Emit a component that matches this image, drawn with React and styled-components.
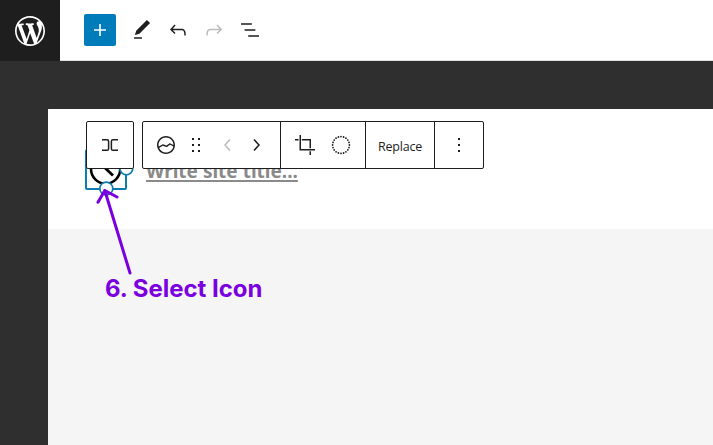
import React from 'react';
import styled, { createGlobalStyle } from 'styled-components';

const Global = createGlobalStyle`
  * { box-sizing: border-box; }
  body { margin: 0; overflow: hidden; background: #2f2f2f; }
`;
const Editor = styled.div`
  width: 713px; height: 445px; display: flex; flex-direction: column;
  background: #2f2f2f; overflow: hidden;
`;
const TopBar = styled.header`
  height: 61px; flex: none; display: flex; background: #fff; border-bottom: 1px solid #e0e0e0;
`;
const Home = styled.div`
  width: 60px; height: 61px; background: #1e1e1e; color: #fff;
  display: flex; align-items: center; justify-content: center;
`;
const Tools = styled.div`
  display: flex; align-items: center; height: 60px; padding-left: 24px; gap: 12px;
`;
const AddButton = styled.button`
  width: 32px; height: 32px; padding: 0; border: 0; border-radius: 2px; margin-right: 2px;
  background: #007cba; color: #fff; display: flex; align-items: center; justify-content: center;
`;
const Icon = styled.svg`
  width: ${p => p.$size || 24}px; height: ${p => p.$size || 24}px; display: block; flex: none;
  fill: currentColor; color: ${p => p.$color || 'inherit'};
`;
const Canvas = styled.main`
  position: relative; flex: 1; margin: 48px 0 0 48px; background: #f5f5f5;
  border-top-left-radius: 1px; overflow: hidden;
`;
const SiteHeader = styled.div`
  height: 120px; background: #fff; display: flex; padding: 40px 0 0 37px; gap: 19px;
`;
const LogoBlock = styled.div`
  width: 42px; height: 41px; border: 2px solid #0f7cb0; border-radius: 2px;
`;
const LogoArt = styled.svg`
  display: block; width: 38px; height: 37px; overflow: visible;
`;
const SiteTitle = styled.div`
  height: 34px; padding-top: 10px; font: 700 19px/24px "Noto Sans", sans-serif;
  color: #8a8a8a; white-space: nowrap;
  text-decoration: underline; text-decoration-thickness: 2px; text-underline-offset: 2px;
  text-decoration-skip-ink: none;
`;
const Toolbars = styled.div`
  position: absolute; left: 38px; top: 12px; display: flex; gap: 8px;
`;
const Toolbar = styled.div`
  height: 48px; display: flex; border: 1px solid #1e1e1e; border-radius: 2px;
  background: #fff; color: #1e1e1e;
`;
const Group = styled.div`
  width: ${p => p.$width}px; display: flex; align-items: center; gap: ${p => p.$gap || 0}px;
  padding-left: ${p => p.$pad}px;
  & + & { border-left: 1px solid #1e1e1e; }
`;
const Movers = styled.div`
  display: flex; gap: 4px; padding-left: 2px;
`;
const Label = styled.span`
  font: 400 12.5px/20px "Open Sans", sans-serif; letter-spacing: -0.2px; padding-top: 4px;
`;
const Arrow = styled.svg`
  position: absolute; left: 45px; top: 74px; width: 50px; height: 96px;
`;
const Caption = styled.div`
  position: absolute; left: 57px; top: 164px; font: 700 24px/32px Inter, sans-serif;
  letter-spacing: -0.02px; color: #7a00df; white-space: nowrap;
`;

const paths = {
  wp: 'M20 10c0-5.51-4.49-10-10-10C4.48 0 0 4.49 0 10c0 5.52 4.48 10 10 10 5.51 0 10-4.48 10-10zM7.78 15.37L4.37 6.22c.55-.02 1.17-.08 1.17-.08.5-.06.44-1.13-.06-1.11 0 0-1.45.11-2.37.11-.18 0-.37 0-.58-.01C4.12 2.69 6.87 1.11 10 1.11c2.33 0 4.45.87 6.05 2.34-.68-.11-1.65.39-1.65 1.58 0 .74.45 1.36.9 2.1.35.61.55 1.36.55 2.46 0 1.49-1.4 5-1.4 5l-3.03-8.37c.54-.02.82-.17.82-.17.5-.05.44-1.25-.06-1.22 0 0-1.44.12-2.38.12-.87 0-2.33-.12-2.33-.12-.5-.03-.56 1.2-.06 1.22l.92.08 1.26 3.41zM17.41 10c.24-.64.74-1.87.43-4.25.7 1.29 1.05 2.71 1.05 4.25 0 3.29-1.73 6.24-4.4 7.78.97-2.59 1.94-5.2 2.92-7.78zM6.1 18.09C3.12 16.65 1.11 13.53 1.11 10c0-1.3.23-2.48.72-3.59C3.25 10.3 4.67 14.2 6.1 18.09zm4.03-6.63l2.58 6.98c-.86.29-1.76.45-2.71.45-.79 0-1.57-.11-2.29-.33.81-2.38 1.62-4.74 2.42-7.1z',
  plus: 'M18 11.2h-5.2V6h-1.6v5.2H6v1.6h5.2V18h1.6v-5.2H18z',
  edit: 'M20.1 5.1L16.9 2 6.2 12.7l-1.3 4.4 4.5-1.3L20.1 5.1zM4 20.8h8v-1.5H4v1.5z',
  undo: 'M18.3 11.7c-.6-.6-1.4-.9-2.3-.9H6.7l2.9-3.3-1.1-1-4.5 5L8.5 16l1-1-2.7-2.7H16c.5 0 .9.2 1.3.5 1 1 1 3.4 1 4.5v.3h1.5v-.2c0-1.5 0-4.3-1.5-5.7z',
  redo: 'M15.6 6.5l-1.1 1 2.9 3.3H8c-.9 0-1.7.3-2.3.9-1.4 1.5-1.4 4.2-1.4 5.6v.2h1.5v-.3c0-1.1 0-3.5 1-4.5.3-.3.7-.5 1.3-.5h9.2L14.5 15l1.1 1.1 4.6-4.6-4.6-5z',
  list: 'M13.8 5.2H3v1.5h10.8V5.2zm-3.6 12v1.5H21v-1.5H10.2zm7.2-6H6.6v1.5h10.8v-1.5z',
  siteLogo: 'M12 3c-5 0-9 4-9 9s4 9 9 9 9-4 9-9-4-9-9-9zm0 1.5c4.1 0 7.5 3.4 7.5 7.5v.1c-1.4-.8-3.3-1.7-3.4-1.8-.2-.1-.5-.1-.8.1l-2.9 2.1L9 11.3c-.2-.1-.4 0-.6.1l-3.7 2.2c-.1-.5-.2-1-.2-1.5 0-4.2 3.4-7.6 7.5-7.6zm0 15c-3.1 0-5.7-1.9-6.9-4.5l3.7-2.2 3.5 1.2c.2.1.5 0 .7-.1l2.9-2.1c.8.4 2.5 1.2 3.5 1.9-.9 3.3-3.9 5.8-7.4 5.8z',
  drag: 'M8 7h2V5H8v2zm0 6h2v-2H8v2zm0 6h2v-2H8v2zm6-14v2h2V5h-2zm0 8h2v-2h-2v2zm0 6h2v-2h-2v2z',
  left: 'M14.6 7l-1.2-1L8 12l5.4 6 1.2-1-4.6-5z',
  right: 'M10.6 6L9.4 7l4.6 5-4.6 5 1.2 1 5.4-6z',
  more: 'M13 19h-2v-2h2v2zm0-6h-2v-2h2v2zm0-6h-2V5h2v2z',
};
const Glyph = ({ name, color }) => (
  <Icon viewBox="0 0 24 24" $color={color}><path d={paths[name]} /></Icon>
);
const RowIcon = () => (
  <Icon viewBox="0 0 24 24">
    <path d="M4 6.75h5q1.6 0 1.6 1.6v7.3q0 1.6-1.6 1.6H4M20 6.75h-5q-1.6 0-1.6 1.6v7.3q0 1.6 1.6 1.6H20" fill="none" stroke="currentColor" strokeWidth="1.5" />
  </Icon>
);
const CropIcon = () => (
  <Icon viewBox="0 0 24 24">
    <path d="M7.25 2v14.75H22M2 6.75h3.6M8.8 6.75h8.45v8.4M17.25 18.3V22" fill="none" stroke="currentColor" strokeWidth="1.5" />
  </Icon>
);
const DuotoneIcon = () => (
  <Icon viewBox="0 0 24 24">
    {Array.from({ length: 20 }, (_, i) => (
      <circle key={i} cx={12 + 8.4 * Math.cos(i * Math.PI / 10)} cy={12 + 8.4 * Math.sin(i * Math.PI / 10)} r="0.9" />
    ))}
  </Icon>
);

export default function App() {
  return (
    <>
      <Global />
      <Editor>
        <TopBar>
          <Home><Icon $size={36} viewBox="-2 -2 24 24"><path d={paths.wp} /></Icon></Home>
          <Tools>
            <AddButton aria-label="Add block"><Glyph name="plus" /></AddButton>
            <Glyph name="edit" color="#1e1e1e" />
            <Glyph name="undo" color="#1e1e1e" />
            <Glyph name="redo" color="#bcbcbc" />
            <Glyph name="list" color="#1e1e1e" />
          </Tools>
        </TopBar>
        <Canvas>
          <SiteHeader>
            <LogoBlock>
              <LogoArt viewBox="0 0 38 37">
                <circle cx="18.6" cy="18" r="14.6" fill="#fff" stroke="#000" strokeWidth="2.6" />
                <path d="M16 15l10 9.5" stroke="#000" strokeWidth="2.8" />
                <circle cx="39.3" cy="17.3" r="6.5" fill="#fff" stroke="#0f7cb0" strokeWidth="1.7" />
                <circle cx="19.3" cy="37.6" r="6.5" fill="#fff" stroke="#0f7cb0" strokeWidth="1.7" />
              </LogoArt>
            </LogoBlock>
            <SiteTitle>Write site title...</SiteTitle>
          </SiteHeader>
          <Toolbars>
            <Toolbar><Group $width={46} $pad={11}><RowIcon /></Group></Toolbar>
            <Toolbar>
              <Group $width={137} $pad={11} $gap={6}>
                <Glyph name="siteLogo" />
                <Glyph name="drag" />
                <Movers>
                  <Glyph name="left" color="#bcbcbc" />
                  <Glyph name="right" />
                </Movers>
              </Group>
              <Group $width={85} $pad={12} $gap={12}><CropIcon /><DuotoneIcon /></Group>
              <Group $width={69} $pad={12}><Label>Replace</Label></Group>
              <Group $width={49} $pad={12}><Glyph name="more" /></Group>
            </Toolbar>
          </Toolbars>
          <Arrow viewBox="93 183 50 96">
            <path d="M130 273L104.8 190.5M98 202.3L104.8 190.5L117 197" fill="none" stroke="#7a00df" strokeWidth="3" strokeLinecap="round" strokeLinejoin="round" />
          </Arrow>
          <Caption>6. Select Icon</Caption>
        </Canvas>
      </Editor>
    </>
  );
}
